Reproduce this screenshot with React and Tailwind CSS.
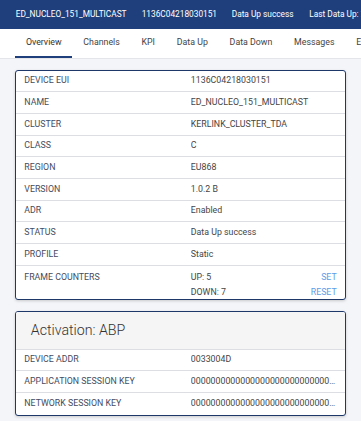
import React from "react";

const rows = [
  ["DEVICE EUI", "1136C04218030151"],
  ["NAME", "ED_NUCLEO_151_MULTICAST"],
  ["CLUSTER", "KERLINK_CLUSTER_TDA"],
  ["CLASS", "C"],
  ["REGION", "EU868"],
  ["VERSION", "1.0.2 B"],
  ["ADR", "Enabled"],
  ["STATUS", "Data Up success"],
  ["PROFILE", "Static"],
];

const keys = "00000000000000000000000000000000";

const tabs = ["Overview", "Channels", "KPI", "Data Up", "Data Down", "Messages", "Events"];

const Row = ({ label, children, last }) => (
  <div className={"flex items-center h-[21.7px] " + (last ? "" : "border-b border-[#dcdee4]")}>
    <div className="w-[174.5px] shrink-0 pl-2 text-[#454c5e]">{label}</div>
    <div className="flex-1 min-w-0 pr-[9px] truncate text-[#454545]">{children}</div>
  </div>
);

export default function App() {
  return (
    <div className="w-[361px] h-[421px] overflow-hidden bg-[#f4f5f8] font-['Roboto',sans-serif]">
      <div className="h-[28.5px] bg-[#1f3f7c] flex items-center pl-[15.7px] text-white text-[8.3px] whitespace-nowrap overflow-hidden">
        <span className="w-[126px] shrink-0">ED_NUCLEO_151_MULTICAST</span>
        <span className="w-[90px] shrink-0">1136C04218030151</span>
        <span className="w-[77.6px] shrink-0">Data Up success</span>
        <span className="shrink-0">Last Data Up: 2 minutes ago</span>
      </div>
      <div className="h-[30.5px] bg-white flex pl-[15px] text-[8.8px] text-[#444] whitespace-nowrap overflow-hidden border-b border-[#e3e5ea]">
        {tabs.map((t, i) => (
          <div
            key={t}
            className={
              "px-[10.9px] flex items-center shrink-0 border-b-2 " +
              (i === 0 ? "border-[#1f3f7c] text-[#333]" : "border-transparent")
            }
          >
            {t}
          </div>
        ))}
      </div>

      <div className="px-[15.3px] pt-[10.5px] text-[8.8px]">
        <div className="bg-white border border-[#1e386a] rounded-[3px] shadow-[0_1px_3px_rgba(0,0,0,0.18)]">
          {rows.map(([l, v]) => (
            <Row key={l} label={l}>
              {v}
            </Row>
          ))}
          <div className="flex h-[33px] pt-[5px]">
            <div className="w-[174.5px] shrink-0 pl-2 text-[#454c5e]">FRAME COUNTERS</div>
            <div className="flex-1 flex flex-col gap-[2.5px] pr-2 text-[#454545]">
              <div className="flex justify-between">
                <span>UP: 5</span>
                <span className="text-[#5f9ce8]">SET</span>
              </div>
              <div className="flex justify-between">
                <span>DOWN: 7</span>
                <span className="text-[#5f9ce8]">RESET</span>
              </div>
            </div>
          </div>
        </div>

        <div className="mt-[11.5px] bg-white border border-[#1e386a] rounded-[3px] shadow-[0_1px_3px_rgba(0,0,0,0.18)] overflow-hidden">
          <div className="h-[37.5px] bg-[#f5f5f5] border-b border-[#dcdee4] flex items-center pl-[14.5px] text-[14.2px] font-light text-[#333]">
            Activation: ABP
          </div>
          <Row label="DEVICE ADDR">0033004D</Row>
          <Row label="APPLICATION SESSION KEY">{keys}</Row>
          <Row label="NETWORK SESSION KEY" last>
            {keys}
          </Row>
        </div>
      </div>
    </div>
  );
}
